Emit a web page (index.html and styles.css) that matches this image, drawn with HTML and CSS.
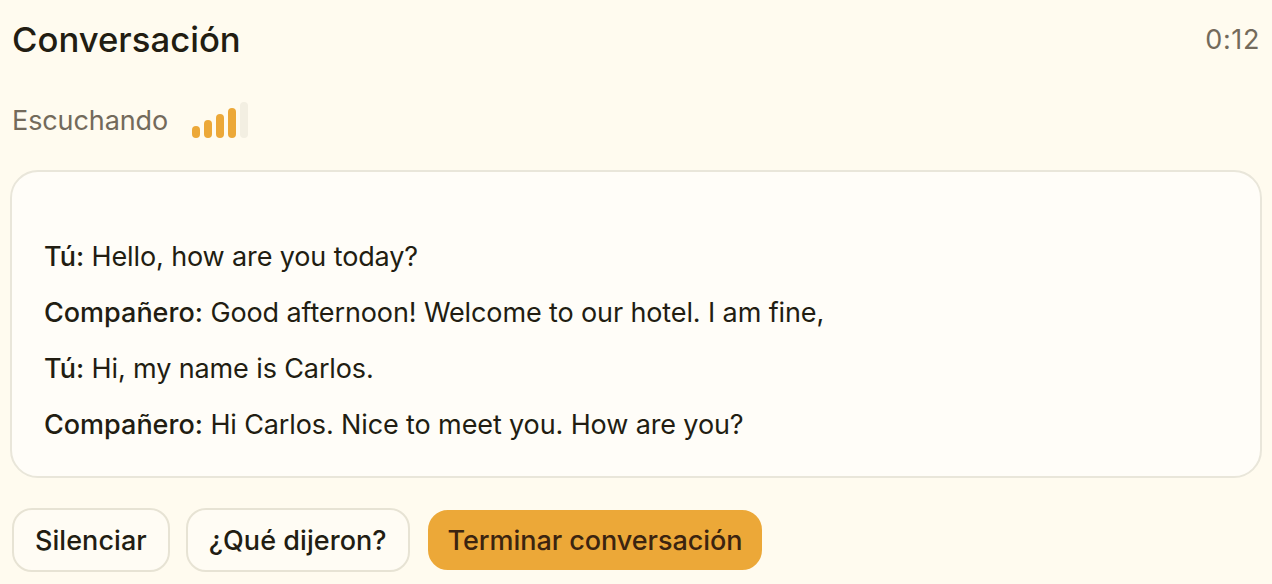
FILE: index.html
```html
<!DOCTYPE html>
<html lang="es">
<head>
  <meta charset="UTF-8">
  <title>Conversación</title>
  <link rel="stylesheet" href="styles.css">
</head>
<body>
  <div class="top-row">
    <h1 class="title">Conversación</h1>
    <span class="timer">0:12</span>
  </div>
  <div class="status-row">
    <span class="status-text">Escuchando</span>
    <div class="level">
      <span class="bar bar-1"></span>
      <span class="bar bar-2"></span>
      <span class="bar bar-3"></span>
      <span class="bar bar-4"></span>
      <span class="bar bar-5"></span>
    </div>
  </div>
  <div class="transcript">
    <p><b>Tú:</b> Hello, how are you today?</p>
    <p><b>Compañero:</b> Good afternoon! Welcome to our hotel. I am fine,</p>
    <p><b>Tú:</b> Hi, my name is Carlos.</p>
    <p><b>Compañero:</b> Hi Carlos. Nice to meet you. How are you?</p>
  </div>
  <div class="actions">
    <button class="btn">Silenciar</button>
    <button class="btn">¿Qué dijeron?</button>
    <button class="btn btn-end">Terminar conversación</button>
  </div>
</body>
</html>
```

FILE: styles.css
```css
*{
  margin: 0;
  padding: 0;
  box-sizing: border-box;
}

body{
  background: #fffbef;
  color: #221d12;
  font-family: Inter, sans-serif;
  padding: 15px 12px 0;
  height: 584px;
  overflow: hidden;
}

.top-row{
  display: flex;
  justify-content: space-between;
  align-items: center;
  height: 48px;
}

.title{
  font-size: 34.7px;
  font-weight: 500;
}

.timer{
  font-size: 27px;
  letter-spacing: 0.6px;
  color: #736a5b;
}

.status-row{
  display: flex;
  align-items: center;
  gap: 24px;
  margin-top: 37px;
  height: 40px;
}

.status-text{
  font-size: 27px;
  letter-spacing: -0.1px;
  color: #736a5b;
}

.level{
  display: flex;
  align-items: flex-end;
  gap: 4px;
  height: 36px;
}

.bar{
  width: 8px;
  border-radius: 4px;
  background: #eca838;
}

.bar-1{ height: 12px; }
.bar-2{ height: 18px; }
.bar-3{ height: 24px; }
.bar-4{ height: 30px; }
.bar-5{ height: 36px; background: #f3efe2; }

.transcript{
  margin: 30px -2px 0;
  height: 308px;
  background: #fffdf8;
  border: 2px solid #e9e6da;
  border-radius: 28px;
  padding: 57px 32px 0;
  font-size: 27px;
  letter-spacing: -0.12px;
}

.transcript p{
  height: 56px;
  line-height: 56px;
}

.transcript b{
  font-weight: 500;
  letter-spacing: 0;
}

.actions{
  display: flex;
  align-items: center;
  gap: 16px;
  margin-top: 30px;
}

.btn{
  height: 64px;
  padding: 0 21px;
  font-family: inherit;
  font-size: 27px;
  font-weight: 500;
  letter-spacing: 0.05px;
  color: inherit;
  background: #fffcf4;
  border: 2px solid #e7e3d4;
  border-radius: 20px;
}

.btn-end{
  background: #eca838;
  border-color: #eca838;
  color: #3b2410;
  height: 60px;
  margin-left: 2px;
  padding: 0 17px 0 18px;
  letter-spacing: -0.05px;
}
```
